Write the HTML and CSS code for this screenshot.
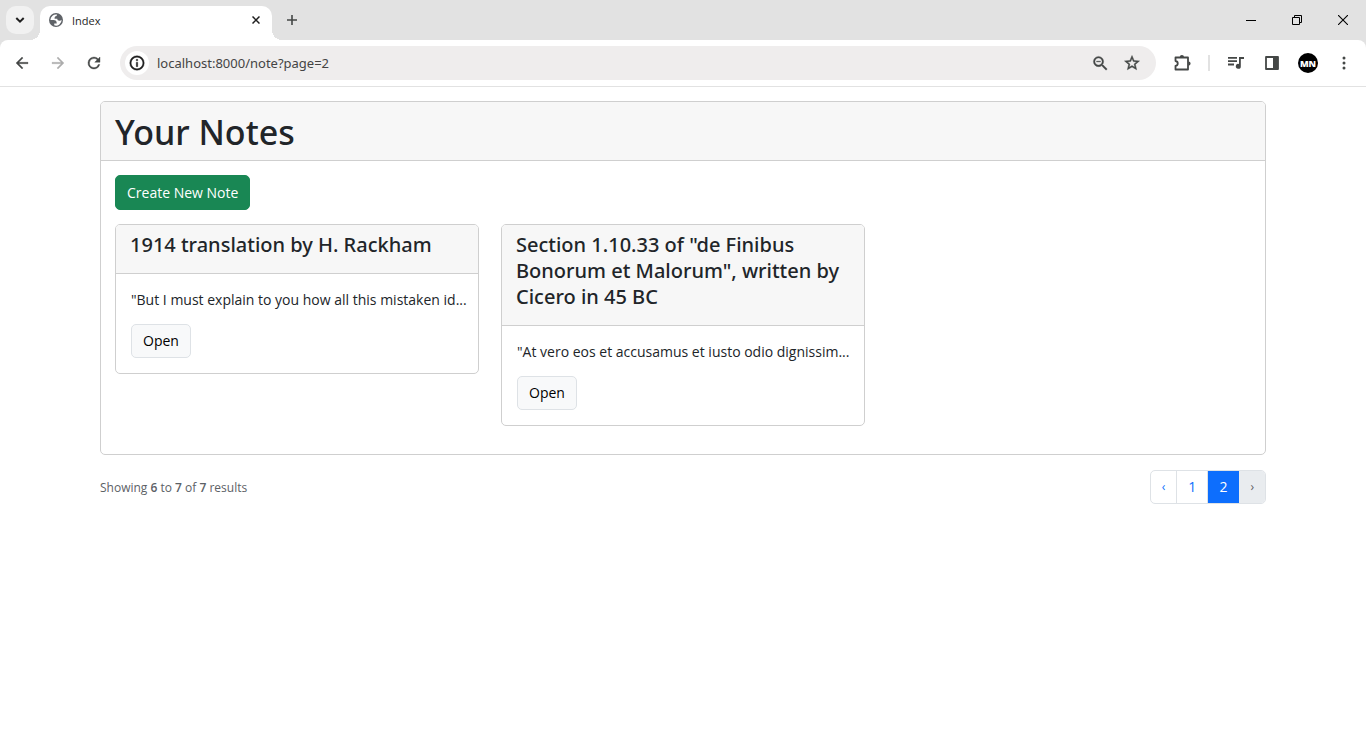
FILE: index.html
```html
<!DOCTYPE html>
<html lang="en">
<head>
<meta charset="utf-8">
<title>Index</title>
<link rel="stylesheet" href="styles.css">
</head>
<body>
<header class="browser">
  <div class="tabstrip">
    <button class="tab-search" aria-label="Search tabs"><svg width="10" height="6" viewBox="0 0 10 6"><path d="M1.3 1l3.7 3.6L8.700 1" fill="none" stroke="#1f1f1f" stroke-width="2"/></svg></button>
    <div class="tab">
      <svg width="14" height="14" viewBox="2 2 20 20"><circle cx="12" cy="12" r="10" fill="#5f6368"/><path fill="#fff" d="M4 12h4.400c3.407.022 4.922 1.730 4.543 5.127H9.488v2.470a8.004 8.004 0 0 0 10.498-8.083C19.327 12.504 18.332 13 17 13c-2.137 0-3.206-.916-3.206-2.750h-3.748c-.274-2.728.683-4.092 2.870-4.092 0-.975.327-1.597.811-1.970A8.004 8.004 0 0 0 4 12z"/></svg>
      <span class="tab-title">Index</span>
      <button class="icon" aria-label="Close tab"><svg width="8" height="8" viewBox="0 0 8 8"><path d="M.5.5l7 7M7.500.5l-7 7" stroke="#1f1f1f" stroke-width="1.500"/></svg></button>
    </div>
    <button class="icon new-tab" aria-label="New tab"><svg width="12" height="12" viewBox="0 0 12 12"><path d="M6 1v10M1 6h10" stroke="#444746" stroke-width="1.600"/></svg></button>
    <div class="window-controls">
      <button class="icon" aria-label="Minimize"><svg width="10" height="10" viewBox="0 0 10 10"><path d="M0 5.500h10" stroke="#000"/></svg></button>
      <button class="icon" aria-label="Restore"><svg width="10" height="10" viewBox="0 0 10 10"><path d="M.5 2.500h7v7h-7zM2.500 2.500v-2h7v7h-2" fill="none" stroke="#000"/></svg></button>
      <button class="icon" aria-label="Close"><svg width="10" height="10" viewBox="0 0 10 10"><path d="M0 0l10 10M10 0L0 10" stroke="#000" stroke-width="1.100"/></svg></button>
    </div>
  </div>
  <div class="toolbar">
    <button class="icon nav" aria-label="Back"><svg width="18" height="18" viewBox="0 0 24 24"><path fill="#444746" stroke="#444746" stroke-width=".4" d="M20 11H7.830l5.590-5.590L12 4l-8 8 8 8 1.410-1.410L7.830 13H20v-2z"/></svg></button>
    <button class="icon nav" aria-label="Forward"><svg width="18" height="18" viewBox="0 0 24 24"><path fill="#adadad" stroke="#adadad" stroke-width=".4" d="M12 4l-1.410 1.410L16.170 11H4v2h12.170l-5.580 5.590L12 20l8-8z"/></svg></button>
    <button class="icon nav" aria-label="Reload"><svg width="18" height="18" viewBox="0 0 24 24"><path fill="#444746" d="M17.650 6.350A7.960 7.960 0 0 0 12 4a8 8 0 1 0 7.730 10h-2.080A6 6 0 1 1 12 6c1.660 0 3.140.69 4.220 1.780L13 11h7V4z" stroke="#444746" stroke-width=".5"/></svg></button>
    <div class="omnibox">
      <button class="icon site-info" aria-label="View site information"><svg width="16" height="16" viewBox="1 1 22 22"><path fill="#1f1f1f" stroke="#1f1f1f" stroke-width=".5" d="M11 7h2v2h-2zm0 4h2v6h-2zm1-9a10 10 0 1 0 0 20 10 10 0 0 0 0-20zm0 18a8 8 0 1 1 0-16 8 8 0 0 1 0 16z"/></svg></button>
      <input class="url" type="text" aria-label="Address" value="localhost:8000/note?page=2">
      <button class="icon nav" aria-label="Zoom"><svg width="19" height="19" viewBox="0 0 24 24"><path fill="#444746" stroke="#444746" stroke-width=".4" d="M15.500 14h-.79l-.28-.27A6.471 6.471 0 0 0 16 9.500 6.500 6.500 0 1 0 9.500 16c1.610 0 3.090-.59 4.230-1.570l.27.28v.79l5 4.990L20.490 19l-4.990-5zm-6 0C7.010 14 5 11.990 5 9.500S7.010 5 9.500 5 14 7.010 14 9.500 11.990 14 9.500 14zM7 9h5v1H7z"/></svg></button>
      <button class="icon nav" aria-label="Bookmark this tab"><svg width="18" height="18" viewBox="0 0 24 24"><path fill="#444746" stroke="#444746" stroke-width=".6" d="M22 9.240l-7.190-.62L12 2 9.190 8.630 2 9.240l5.460 4.730L5.820 21 12 17.270 18.180 21l-1.630-7.030L22 9.240zM12 15.400l-3.760 2.270 1-4.280-3.320-2.880 4.380-.38L12 6.100l1.710 4.040 4.380.38-3.320 2.880 1 4.280L12 15.400z"/></svg></button>
    </div>
    <button class="icon ext" aria-label="Extensions"><svg width="18" height="18" viewBox="0 0 18 18"><path d="M2.500 3.500h12.500v12H2.500v-3.500c3-.5 3-4.500 0-5z" fill="none" stroke="#444746" stroke-width="1.800" stroke-linejoin="round"/><path fill="#444746" d="M6.800 3a2.100 2.100 0 0 1 4.200 0zM15.500 7.500a2.100 2.100 0 0 1 0 4.200z"/></svg></button>
    <span class="divider"></span>
    <div class="actions">
      <button class="icon" aria-label="Media controls"><svg width="18" height="18" viewBox="0 0 18 18"><path fill="#444746" d="M1 3h9v1.800H1zM1 6.300h9v1.800H1zM1 9.600h6v1.800H1zM12 3h5v2h-3.200v7.200A2.500 2.500 0 1 1 12 9.900z"/></svg></button>
      <button class="icon" aria-label="Side panel"><svg width="16" height="16" viewBox="0 0 16 16"><path d="M2 2h12v12H2z" fill="none" stroke="#444746" stroke-width="1.800" stroke-linejoin="round"/><path fill="#444746" d="M9 2h5v12H9z"/></svg></button>
      <button class="icon avatar" aria-label="Profile">MN</button>
      <button class="icon" aria-label="Menu"><svg width="4" height="14" viewBox="0 0 4 14"><g fill="#444746"><circle cx="2" cy="2" r="1.500"/><circle cx="2" cy="7" r="1.500"/><circle cx="2" cy="12" r="1.500"/></g></svg></button>
    </div>
  </div>
</header>
<main class="container">
  <section class="card">
    <div class="card-header"><h1>Your Notes</h1></div>
    <div class="card-body">
      <a class="btn btn-success" href="#">Create New Note</a>
      <div class="notes">
        <article class="card">
          <div class="card-header note-header"><h2>1914 translation by H. Rackham</h2></div>
          <div class="card-body note-body">
            <p>"But I must explain to you how all this mistaken id...</p>
            <a class="btn btn-light" href="#">Open</a>
          </div>
        </article>
        <article class="card">
          <div class="card-header note-header"><h2>Section 1.10.33 of "de Finibus Bonorum et Malorum", written by Cicero in 45 BC</h2></div>
          <div class="card-body note-body">
            <p>"At vero eos et accusamus et iusto odio dignissim...</p>
            <a class="btn btn-light" href="#">Open</a>
          </div>
        </article>
      </div>
    </div>
  </section>
  <div class="footer">
    <p class="summary">Showing <b>6</b> to <b>7</b> of <b>7</b> results</p>
    <nav class="pagination" aria-label="Pages">
      <a class="arrow" href="#" aria-label="Previous">‹</a>
      <a href="#">1</a>
      <span class="active" aria-current="page">2</span>
      <span class="arrow disabled">›</span>
    </nav>
  </div>
</main>
</body>
</html>
```
FILE: styles.css
```css
* { box-sizing: border-box; }
body {
  margin: 0;
  background: #fff;
  color: #212529;
  font-family: "Open Sans", "Noto Sans", sans-serif;
  font-size: 14px;
  line-height: 21px;
}
h1, h2, p { margin: 0; }
a { text-decoration: none; }
svg { display: block; }

.icon {
  display: flex;
  flex: none;
  align-items: center;
  justify-content: center;
  padding: 0;
  border: 0;
  background: none;
}

/* Browser frame */
.browser { background: #e2e2e2; }
.tabstrip {
  display: flex;
  align-items: center;
  height: 40px;
  padding-left: 6px;
}
.tab-search {
  display: flex;
  align-items: center;
  justify-content: center;
  width: 28px;
  height: 28px;
  margin-right: 6px;
  padding: 0;
  border: 0;
  border-radius: 10px;
  background: #f1f1f1;
}
.tab {
  position: relative;
  display: flex;
  align-self: flex-end;
  align-items: center;
  gap: 9px;
  width: 232px;
  height: 34px;
  padding: 0 12px 6px 9px;
  border-radius: 10px 10px 0 0;
  background: #fff;
  color: #1f1f1f;
}
.tab::before, .tab::after {
  content: "";
  position: absolute;
  bottom: 0;
  width: 10px;
  height: 10px;
}
.tab::before {
  right: 100%;
  background: radial-gradient(circle at 0 0, transparent 10px, #fff 10px);
}
.tab::after {
  left: 100%;
  background: radial-gradient(circle at 100% 0, transparent 10px, #fff 10px);
}
.tab-title { flex: 1; font-size: 11px; }
.new-tab { margin-left: 14px; }
.window-controls {
  display: flex;
  margin-left: auto;
}
.window-controls .icon { width: 46px; height: 40px; }
.toolbar {
  display: flex;
  align-items: center;
  height: 47px;
  padding: 0 4px;
  border-bottom: 1px solid #e2e2e2;
  border-radius: 8px 8px 0 0;
  background: #fff;
}
.nav { width: 36px; }
.omnibox {
  display: flex;
  flex: 1;
  align-items: center;
  height: 34px;
  margin-left: 8px;
  padding: 0 8px 0 5px;
  border-radius: 17px;
  background: #efeded;
}
.omnibox .nav { width: 32px; }
.site-info {
  width: 24px;
  height: 24px;
  border-radius: 50%;
  background: #fff;
}
.url {
  flex: 1;
  min-width: 0;
  margin-left: 8px;
  padding: 0;
  border: 0;
  outline: 0;
  background: none;
  color: #444;
  font: 13px "Noto Sans", "Open Sans", sans-serif;
}
.ext { width: 52px; }
.divider { width: 2px; height: 16px; background: #e2e2e2; }
.actions { display: flex; margin-left: 8px; }
.actions .icon { width: 36px; height: 20px; }
.actions .avatar {
  width: 20px;
  margin: 0 8px;
  border-radius: 50%;
  background: #000;
  color: #fff;
  font: 800 9px "Open Sans", sans-serif;
}

/* Page */
.container { margin: 14px 100px; }
.card {
  overflow: hidden;
  border: 1px solid #cfcfcf;
  border-radius: 5px;
  background: #fff;
}
.card-header {
  padding: 7px 14px;
  border-bottom: 1px solid #cfcfcf;
  background: #f7f7f7;
}
h1, h2 { font-family: "Noto Sans", "Open Sans", sans-serif; font-weight: 500; }
h1 { padding-top: 2px; font-size: 34px; line-height: 42px; }
.card-body { padding: 14px 14px 28px; }
.btn {
  display: inline-block;
  padding: 6px 11px;
  border: 1px solid;
  border-radius: 5px;
}
.btn-success { border-color: #198754; background: #198754; color: #fff; }
.btn-light { border-color: #dee2e6; background: #f8f9fa; color: #000; line-height: 20px; }
.notes {
  display: grid;
  grid-template-columns: repeat(3, minmax(0, 1fr));
  align-items: start;
  gap: 22px;
  margin-top: 14px;
}
.note-header { padding-bottom: 15px; }
h2 { font-size: 20px; line-height: 26px; }
.note-body { display: flex; flex-direction: column; align-items: flex-start; gap: 14px; padding: 15px; }
.note-body p { white-space: nowrap; }

.footer {
  display: flex;
  align-items: center;
  justify-content: space-between;
  margin-top: 15px;
}
.summary { color: #5c6166; font-size: 12px; }
.summary b { font-weight: 600; }
.pagination {
  display: flex;
  overflow: hidden;
  border: 1px solid #dee2e6;
  border-radius: 5px;
  line-height: 20px;
}
.pagination > * {
  padding: 6px 11px;
  border-right: 1px solid #dee2e6;
  color: #0d6efd;
}
.pagination .arrow { font-size: 12px; }
.pagination .active { border-color: #0d6efd; background: #0d6efd; color: #fff; }
.pagination .disabled { border: 0; background: #e9ecef; color: #5c6166; }
```
